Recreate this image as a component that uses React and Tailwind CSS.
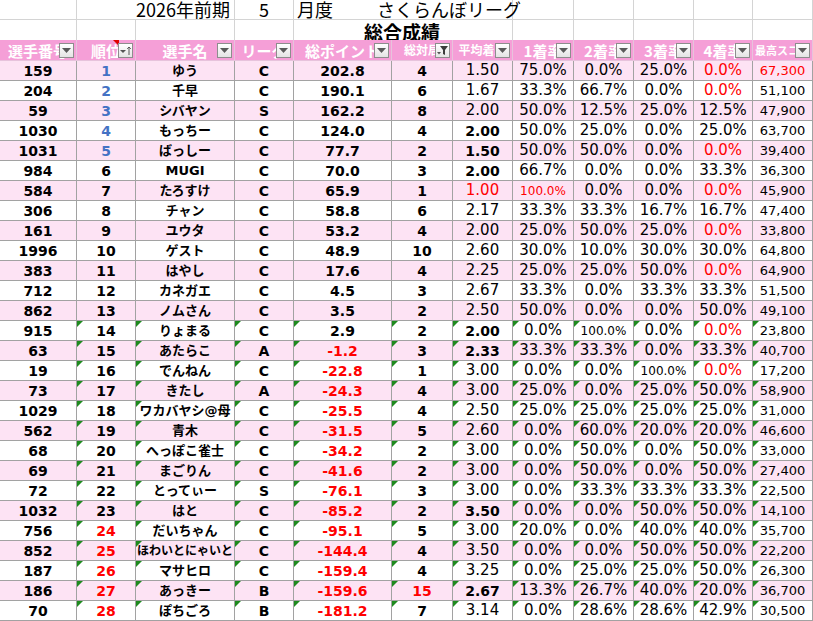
const headers = [
  { label: "選手番号", size: "text-[15px]" },
  { label: "順位", size: "text-[15px]", sort: true, comment: true },
  { label: "選手名", size: "text-[15px]" },
  { label: "リーグ", size: "text-[15px]" },
  { label: "総ポイント", size: "text-[15px]" },
  { label: "総対局", size: "text-[12px]", funnel: true },
  { label: "平均着順", size: "text-[12px]" },
  { label: "1着率", size: "text-[15px]" },
  { label: "2着率", size: "text-[15px]" },
  { label: "3着率", size: "text-[15px]" },
  { label: "4着率", size: "text-[15px]" },
  { label: "最高スコア", size: "text-[11px]" },
];

// no, rank, name, league, pts, games, avg, 1st, 2nd, 3rd, 4th, best
const rows = [
  ["159", 1, "ゆう", "C", "202.8", "4", "1.50", "75.0%", "0.0%", "25.0%", "0.0%", "67,300"],
  ["204", 2, "千早", "C", "190.1", "6", "1.67", "33.3%", "66.7%", "0.0%", "0.0%", "51,100"],
  ["59", 3, "シバヤン", "S", "162.2", "8", "2.00", "50.0%", "12.5%", "25.0%", "12.5%", "47,900"],
  ["1030", 4, "もっちー", "C", "124.0", "4", "2.00", "50.0%", "25.0%", "0.0%", "25.0%", "63,700"],
  ["1031", 5, "ばっしー", "C", "77.7", "2", "1.50", "50.0%", "50.0%", "0.0%", "0.0%", "39,400"],
  ["984", 6, "MUGI", "C", "70.0", "3", "2.00", "66.7%", "0.0%", "0.0%", "33.3%", "36,300"],
  ["584", 7, "たろすけ", "C", "65.9", "1", "1.00", "100.0%", "0.0%", "0.0%", "0.0%", "45,900"],
  ["306", 8, "チャン", "C", "58.8", "6", "2.17", "33.3%", "33.3%", "16.7%", "16.7%", "47,400"],
  ["161", 9, "ユウタ", "C", "53.2", "4", "2.00", "25.0%", "50.0%", "25.0%", "0.0%", "33,800"],
  ["1996", 10, "ゲスト", "C", "48.9", "10", "2.60", "30.0%", "10.0%", "30.0%", "30.0%", "64,800"],
  ["383", 11, "はやし", "C", "17.6", "4", "2.25", "25.0%", "25.0%", "50.0%", "0.0%", "64,900"],
  ["712", 12, "カネガエ", "C", "4.5", "3", "2.67", "33.3%", "0.0%", "33.3%", "33.3%", "51,500"],
  ["862", 13, "ノムさん", "C", "3.5", "2", "2.50", "50.0%", "0.0%", "0.0%", "50.0%", "49,100"],
  ["915", 14, "りょまる", "C", "2.9", "2", "2.00", "0.0%", "100.0%", "0.0%", "0.0%", "23,800"],
  ["63", 15, "あたらこ", "A", "-1.2", "3", "2.33", "33.3%", "33.3%", "0.0%", "33.3%", "40,700"],
  ["19", 16, "でんねん", "C", "-22.8", "1", "3.00", "0.0%", "0.0%", "100.0%", "0.0%", "17,200"],
  ["73", 17, "きたし", "A", "-24.3", "4", "3.00", "25.0%", "0.0%", "25.0%", "50.0%", "58,900"],
  ["1029", 18, "ワカバヤシ@母", "C", "-25.5", "4", "2.50", "25.0%", "25.0%", "25.0%", "25.0%", "31,000"],
  ["562", 19, "青木", "C", "-31.5", "5", "2.60", "0.0%", "60.0%", "20.0%", "20.0%", "46,600"],
  ["68", 20, "へっぽこ雀士", "C", "-34.2", "2", "3.00", "0.0%", "50.0%", "0.0%", "50.0%", "33,000"],
  ["69", 21, "まごりん", "C", "-41.6", "2", "3.00", "0.0%", "50.0%", "0.0%", "50.0%", "27,400"],
  ["72", 22, "とってぃー", "S", "-76.1", "3", "3.00", "0.0%", "33.3%", "33.3%", "33.3%", "22,500"],
  ["1032", 23, "はと", "C", "-85.2", "2", "3.50", "0.0%", "0.0%", "50.0%", "50.0%", "14,100"],
  ["756", 24, "だいちゃん", "C", "-95.1", "5", "3.00", "20.0%", "0.0%", "40.0%", "40.0%", "35,700"],
  ["852", 25, "ほわいとにゃいと", "C", "-144.4", "4", "3.50", "0.0%", "0.0%", "50.0%", "50.0%", "22,200"],
  ["187", 26, "マサヒロ", "C", "-159.4", "4", "3.25", "0.0%", "25.0%", "25.0%", "50.0%", "26,300"],
  ["186", 27, "あっきー", "B", "-159.6", "15", "2.67", "13.3%", "26.7%", "40.0%", "20.0%", "36,700"],
  ["70", 28, "ぽちごろ", "B", "-181.2", "7", "3.14", "0.0%", "28.6%", "28.6%", "42.9%", "30,500"],
];

const boldAvg = [4, 5, 6, 14, 15, 23, 27];

const Triangle = () => (
  <span className="absolute left-0 top-0 w-0 h-0 border-t-[6px] border-r-[6px] border-t-[#1e8a1e] border-r-transparent" />
);

const FilterButton = ({ sort, funnel }) => (
  <span className="absolute right-[2px] top-[3px] w-[15px] h-[15px] flex items-center justify-center bg-gradient-to-b from-white to-[#e4e4e4] border border-[#8d8d8d]">
    {sort ? (
      <svg width="13" height="13" viewBox="0 0 13 13">
        <path d="M1 6h6L4 9z" fill="#555" />
        <path d="M10 3v8M8.2 4.8 10 3l1.8 1.8" stroke="#555" strokeWidth="1" fill="none" />
      </svg>
    ) : funnel ? (
      <svg width="13" height="13" viewBox="0 0 13 13">
        <path d="M4 2h8L9 6v5l-2-1V6z" fill="#3c3c3c" />
        <path d="M1 8h4L3 10.5z" fill="#555" />
      </svg>
    ) : (
      <svg width="9" height="5" viewBox="0 0 9 5">
        <path d="M0 0h9L4.5 5z" fill="#5a5a5a" />
      </svg>
    )}
  </span>
);

const cellStyle = (ri, ci, v) => {
  const rank = ri + 1;
  let cls = "text-black";
  let size = "text-[14px] font-bold";
  if (ci === 1) {
    if (rank <= 5) cls = "text-[#4472c4]";
    else if (rank >= 24) cls = "text-[#ff0000]";
  }
  if (ci === 2) size = v.length >= 8 ? "text-[12px] font-bold" : "text-[13px] font-bold";
  if (ci === 4 && v.startsWith("-")) cls = "text-[#ff0000]";
  if (ci === 5 && v === "15") cls = "text-[#ff0000]";
  if (ci === 6) {
    size = boldAvg.includes(rank) ? "text-[14px] font-bold" : "text-[15px]";
    if (v === "1.00") cls = "text-[#ff0000]";
  }
  if (ci >= 7 && ci <= 10) {
    size = v === "100.0%" ? "text-[12px]" : "text-[15px]";
    if (ci === 7 && v === "100.0%") cls = "text-[#ff0000]";
    if (ci === 10 && v === "0.0%") cls = "text-[#ff0000]";
  }
  if (ci === 11) {
    size = "text-[13px]";
    if (rank === 1) cls = "text-[#ff0000]";
  }
  return `${cls} ${size}`;
};

export default function App() {
  return (
    <div className="w-[813px] h-[621px] overflow-hidden bg-white font-['DejaVu_Sans','Noto_Sans_CJK_JP',sans-serif] leading-none">
      {/* title row 1 */}
      <div className="flex h-[20px] text-[18px] text-black font-['Noto_Sans_CJK_JP',sans-serif]">
        <div className="w-[77px] border-r border-b border-[#d4d4d4]" />
        <div className="w-[158px] border-r border-b border-[#d4d4d4] flex items-end justify-end pr-[4px] pb-[1px] whitespace-nowrap">2026年前期</div>
        <div className="w-[59px] border-r border-b border-[#d4d4d4] flex items-end justify-center pb-[1px]">5</div>
        <div className="w-[219px] border-r border-b border-[#d4d4d4] flex items-end pb-[1px] whitespace-nowrap">
          <span className="ml-[3px]">月度</span>
          <span className="ml-[44px]">さくらんぼリーグ</span>
        </div>
        <div className="w-[61px] border-r border-b border-[#d4d4d4]" />
        <div className="w-[60px] border-r border-b border-[#d4d4d4]" />
        <div className="w-[60px] border-r border-b border-[#d4d4d4]" />
        <div className="w-[59px] border-r border-b border-[#d4d4d4]" />
        <div className="w-[60px] border-r border-b border-[#d4d4d4]" />
      </div>

      {/* title row 2 */}
      <div className="flex h-[20px] text-[19px] font-bold text-black font-['Noto_Sans_CJK_JP',sans-serif]">
        <div className="w-[77px] border-r border-[#d4d4d4]" />
        <div className="w-[59px] border-r border-[#d4d4d4]" />
        <div className="w-[99px] border-r border-[#d4d4d4]" />
        <div className="w-[59px] border-r border-[#d4d4d4]" />
        <div className="w-[219px] border-r border-[#d4d4d4] flex items-end whitespace-nowrap">
          <span className="ml-[70px] mb-[-1px]">総合成績</span>
        </div>
        <div className="w-[61px] border-r border-[#d4d4d4]" />
        <div className="w-[60px] border-r border-[#d4d4d4]" />
        <div className="w-[60px] border-r border-[#d4d4d4]" />
        <div className="w-[59px] border-r border-[#d4d4d4]" />
        <div className="w-[60px] border-r border-[#d4d4d4]" />
      </div>

      <div className="grid grid-cols-[77px_59px_99px_59px_98px_61px_60px_61px_60px_60px_59px_60px]">
        {/* header */}
        {headers.map((h) => (
          <div
            key={h.label}
            className="relative h-[21px] bg-[#f59fd7] border-r border-b border-[#e7c3dc] flex items-center justify-center overflow-hidden whitespace-nowrap"
          >
            <span className={`${h.size} font-bold text-white font-['Noto_Sans_CJK_JP',sans-serif]`}>{h.label}</span>
            {h.comment && (
              <span className="absolute right-[16px] top-0 w-0 h-0 border-t-[6px] border-l-[6px] border-t-[#e00000] border-l-transparent" />
            )}
            <FilterButton sort={h.sort} funnel={h.funnel} />
          </div>
        ))}

        {/* data */}
        {rows.map((r, ri) =>
          r.map((v, ci) => (
            <div
              key={`${ri}-${ci}`}
              className={`relative h-[20px] border-r border-b border-[#a2a2a2] flex items-center justify-center overflow-hidden whitespace-nowrap ${
                ri % 2 === 0 ? "bg-[#fde3f4]" : "bg-white"
              }`}
            >
              {ri >= 13 && ci >= 1 && <Triangle />}
              <span className={cellStyle(ri, ci, String(v))}>{v}</span>
            </div>
          ))
        )}
      </div>
    </div>
  );
}
